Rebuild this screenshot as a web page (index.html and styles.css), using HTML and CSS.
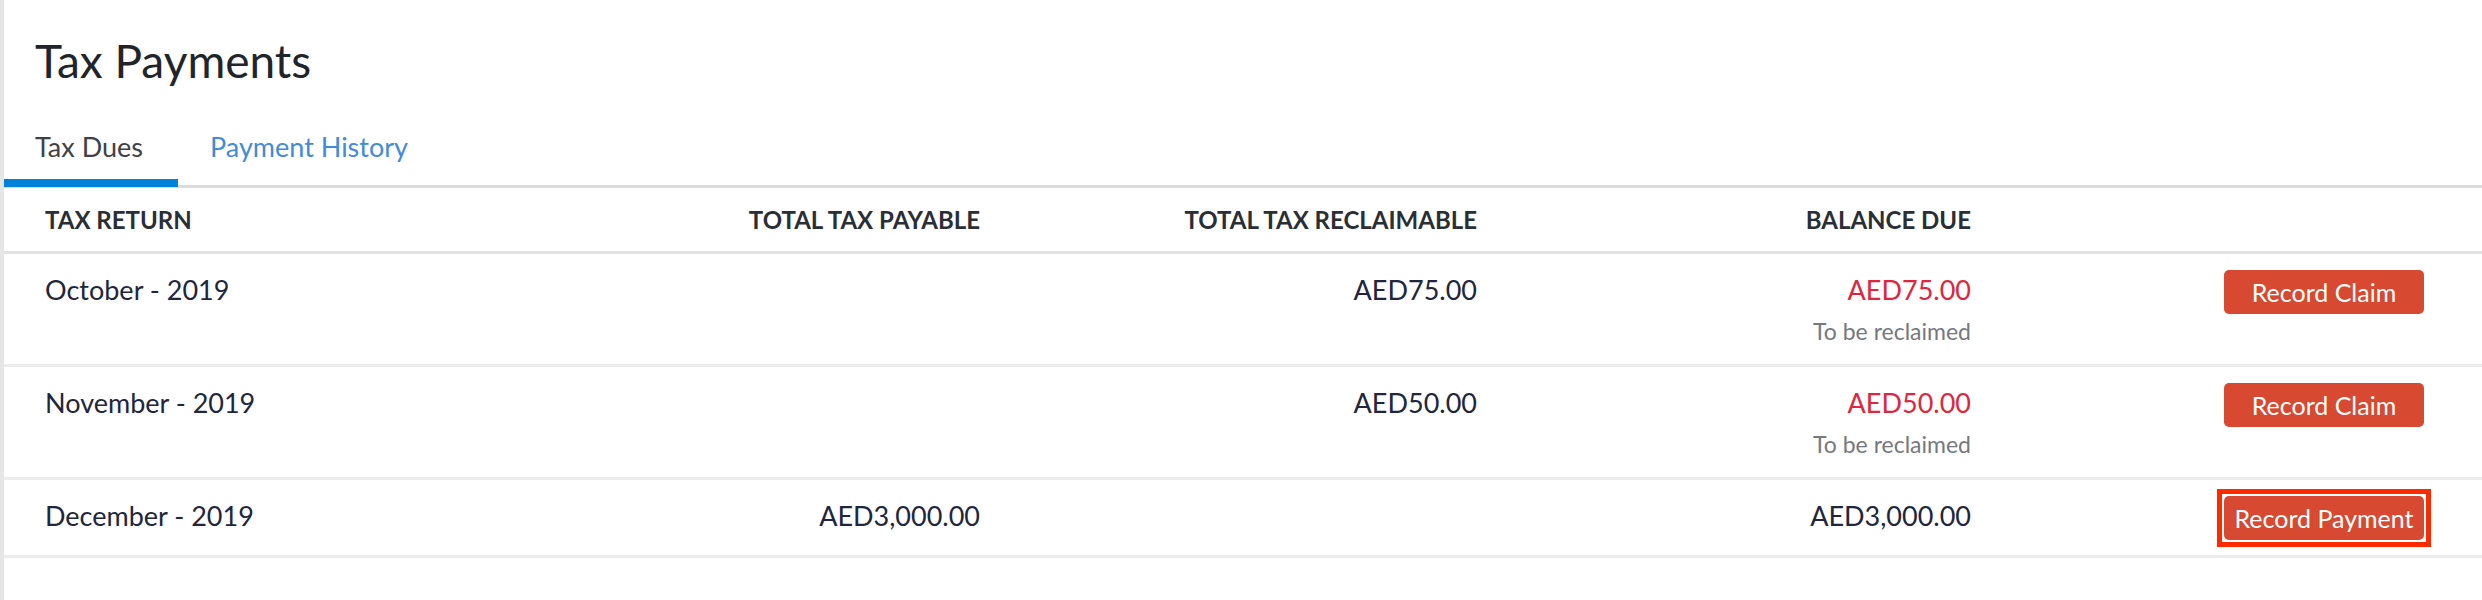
FILE: index.html
```html
<!DOCTYPE html>
<html lang="en">
<head>
<meta charset="utf-8">
<title>Tax Payments</title>
<link rel="stylesheet" href="styles.css">
</head>
<body>
<div class="page">
  <h1 class="title">Tax Payments</h1>
  <nav class="tabs">
    <span class="tab tab-active">Tax Dues</span>
    <span class="tab tab-link">Payment History</span>
  </nav>
  <div class="table">
    <div class="row head">
      <div class="cell c1">TAX RETURN</div>
      <div class="cell num">TOTAL TAX PAYABLE</div>
      <div class="cell num">TOTAL TAX RECLAIMABLE</div>
      <div class="cell num">BALANCE DUE</div>
      <div class="cell act"></div>
    </div>
    <div class="row body">
      <div class="cell c1">October - 2019</div>
      <div class="cell num"></div>
      <div class="cell num">AED75.00</div>
      <div class="cell num"><div class="due">AED75.00</div><div class="sub">To be reclaimed</div></div>
      <div class="cell act"><button class="btn">Record Claim</button></div>
    </div>
    <div class="row body">
      <div class="cell c1">November - 2019</div>
      <div class="cell num"></div>
      <div class="cell num">AED50.00</div>
      <div class="cell num"><div class="due">AED50.00</div><div class="sub">To be reclaimed</div></div>
      <div class="cell act"><button class="btn">Record Claim</button></div>
    </div>
    <div class="row body">
      <div class="cell c1">December - 2019</div>
      <div class="cell num">AED3,000.00</div>
      <div class="cell num"></div>
      <div class="cell num">AED3,000.00</div>
      <div class="cell act"><span class="highlight"><button class="btn">Record Payment</button></span></div>
    </div>
  </div>
</div>
</body>
</html>
```
FILE: styles.css
```css
html, body {
  margin: 0;
  padding: 0;
  background: #ffffff;
}
body {
  font-family: "Lato", "Liberation Sans", sans-serif;
  color: #21263c;
}
.page {
  min-height: 600px;
  border-left: 4px solid #e6e6e6;
  box-sizing: border-box;
}
.title {
  margin: 0;
  padding: 31px 0 0 31px;
  font-size: 46px;
  line-height: 60px;
  font-weight: 400;
  color: #212529;
}
.tabs {
  display: flex;
  margin-top: 33px;
  border-bottom: 3px solid #dcdcdc;
  height: 61px;
  box-sizing: content-box;
}
.tab {
  font-size: 27px;
  line-height: 40px;
  padding: 3px 31px 0;
  box-sizing: border-box;
}
.tab-active {
  color: #3f4147;
  width: 174px;
  border-bottom: 8px solid #0082db;
  margin-bottom: -2px;
  height: 63px;
}
.tab-link {
  color: #428bd6;
  padding-left: 32px;
}
.table {
  display: flex;
  flex-direction: column;
}
.row {
  display: grid;
  grid-template-columns: 455px 480px 497px 494px 453px;
  padding: 0 58px 0 41px;
  align-items: start;
}
.head {
  height: 63px;
  align-items: center;
  border-bottom: 3px solid #e3e3e3;
  font-size: 24px;
  font-weight: 700;
  color: #2a2e35;
}
.body {
  padding-top: 16px;
  padding-bottom: 15px;
  border-bottom: 3px solid #ececec;
  font-size: 27px;
  line-height: 40px;
}
.body .cell {
  min-height: 44px;
}
.num {
  text-align: right;
}
.act {
  display: flex;
  justify-content: flex-end;
}
.due {
  color: #e0263e;
}
.sub {
  margin-top: 3px;
  font-size: 23px;
  line-height: 36px;
  color: #75787f;
}
.btn {
  width: 200px;
  height: 44px;
  border: none;
  border-radius: 5px;
  background: #d74a31;
  color: #ffffff;
  font-family: "Lato", "Liberation Sans", sans-serif;
  font-size: 25px;
  font-weight: 400;
  padding: 0;
  cursor: pointer;
}
.highlight {
  display: inline-flex;
  outline: 5px solid #ff2a00;
  padding: 2px;
  margin: -2px;
  outline-offset: 0;
}
```
